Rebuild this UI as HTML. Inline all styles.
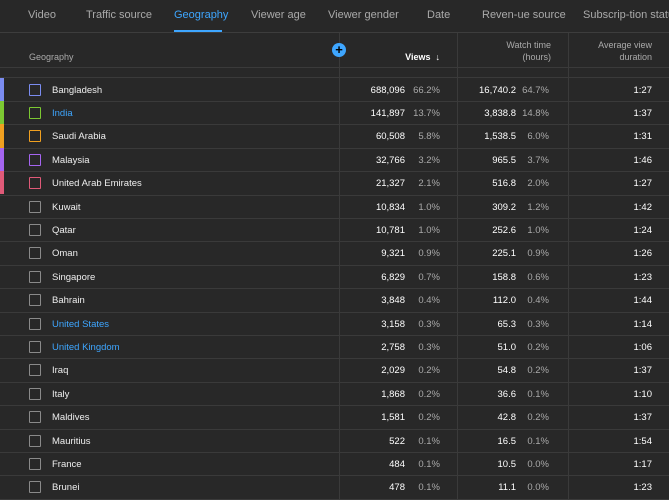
<!DOCTYPE html>
<html><head><meta charset="utf-8"><style>
*{box-sizing:border-box;margin:0;padding:0}
body{width:669px;height:500px;overflow:hidden;background:#282828;font-family:"Liberation Sans",Arial,sans-serif;color:#fff;position:relative}
.tabs{position:absolute;left:0;top:0;width:669px;height:33px;border-bottom:1px solid #3d3d3d;font-size:11px;color:#aaa}
.tabs span{position:absolute;top:9px;white-space:nowrap}
.tabs .act{color:#3ea6ff}
.ul{position:absolute;left:174px;top:30px;width:48px;height:2px;background:#3ea6ff}
.vl{position:absolute;top:33px;bottom:0;width:1px;background:#3a3a3a}
.hl{position:absolute;left:0;width:669px;height:1px;background:#3a3a3a}
.h{position:absolute;font-size:9px;color:#aaa;text-align:right;line-height:12px}
.row{position:absolute;left:0;width:669px;height:23.4px;font-size:9.5px}
.row .bar{position:absolute;left:0;top:0;width:4px;height:100%}
.row .cb{position:absolute;left:29px;top:6px;width:12px;height:12px;border:1.5px solid #8a8a8a;border-radius:1px}
.row .n{position:absolute;left:52px;top:7px;color:#eee}
.row .r{position:absolute;top:7px;text-align:right}
.p{color:#aaa}
</style></head><body>
<div class="tabs">
<span style="left:28px">Video</span><span style="left:86px">Traffic source</span><span class="act" style="left:174px">Geography</span><span style="left:251px">Viewer age</span><span style="left:328px">Viewer gender</span><span style="left:427px">Date</span><span style="left:482px">Reven-ue source</span><span style="left:583px">Subscrip-tion status</span>
<div class="ul"></div></div>
<div class="vl" style="left:339px"></div><div class="vl" style="left:457px"></div><div class="vl" style="left:568px"></div>
<div class="h" style="left:29px;top:51px;text-align:left">Geography</div>
<div style="position:absolute;left:332px;top:43px;width:14px;height:14px;border-radius:50%;background:#3ea6ff;color:#000;font-size:13px;font-weight:bold;line-height:14px;text-align:center">+</div>
<div class="h" style="left:340px;top:51px;width:100px;color:#fff;font-weight:bold">Views &nbsp;↓</div>
<div class="h" style="left:458px;top:39px;width:93px">Watch time<br>(hours)</div>
<div class="h" style="left:569px;top:39px;width:83px">Average view<br>duration</div>
<div class="hl" style="top:67px"></div><div class="hl" style="top:77px"></div>
<div id="rows"></div>
<script>
var d=[["Bangladesh","688,096","66.2%","16,740.2","64.7%","1:27","#7b8cf0",0],["India","141,897","13.7%","3,838.8","14.8%","1:37","#7cc832",1],["Saudi Arabia","60,508","5.8%","1,538.5","6.0%","1:31","#f0a020",0],["Malaysia","32,766","3.2%","965.5","3.7%","1:46","#a565f0",0],["United Arab Emirates","21,327","2.1%","516.8","2.0%","1:27","#e05a78",0],["Kuwait","10,834","1.0%","309.2","1.2%","1:42","",0],["Qatar","10,781","1.0%","252.6","1.0%","1:24","",0],["Oman","9,321","0.9%","225.1","0.9%","1:26","",0],["Singapore","6,829","0.7%","158.8","0.6%","1:23","",0],["Bahrain","3,848","0.4%","112.0","0.4%","1:44","",0],["United States","3,158","0.3%","65.3","0.3%","1:14","",1],["United Kingdom","2,758","0.3%","51.0","0.2%","1:06","",1],["Iraq","2,029","0.2%","54.8","0.2%","1:37","",0],["Italy","1,868","0.2%","36.6","0.1%","1:10","",0],["Maldives","1,581","0.2%","42.8","0.2%","1:37","",0],["Mauritius","522","0.1%","16.5","0.1%","1:54","",0],["France","484","0.1%","10.5","0.0%","1:17","",0],["Brunei","478","0.1%","11.1","0.0%","1:23","",0]];
var h="";d.forEach(function(r,i){var t=77.5+i*23.4;
h+='<div class="row" style="top:'+t+'px">'+(r[6]?'<div class="bar" style="background:'+r[6]+'"></div>':'')+'<div class="cb" style="'+(r[6]?'border-color:'+r[6]:'')+'"></div><div class="n" style="'+(r[7]?'color:#3ea6ff':'')+'">'+r[0]+'</div><div class="r" style="right:264px">'+r[1]+'</div><div class="r p" style="right:229px">'+r[2]+'</div><div class="r" style="right:153px">'+r[3]+'</div><div class="r p" style="right:120px">'+r[4]+'</div><div class="r" style="right:17px">'+r[5]+'</div></div><div class="hl" style="top:'+(t+23.4)+'px"></div>';});
document.getElementById("rows").innerHTML=h;
</script>
</body></html>
